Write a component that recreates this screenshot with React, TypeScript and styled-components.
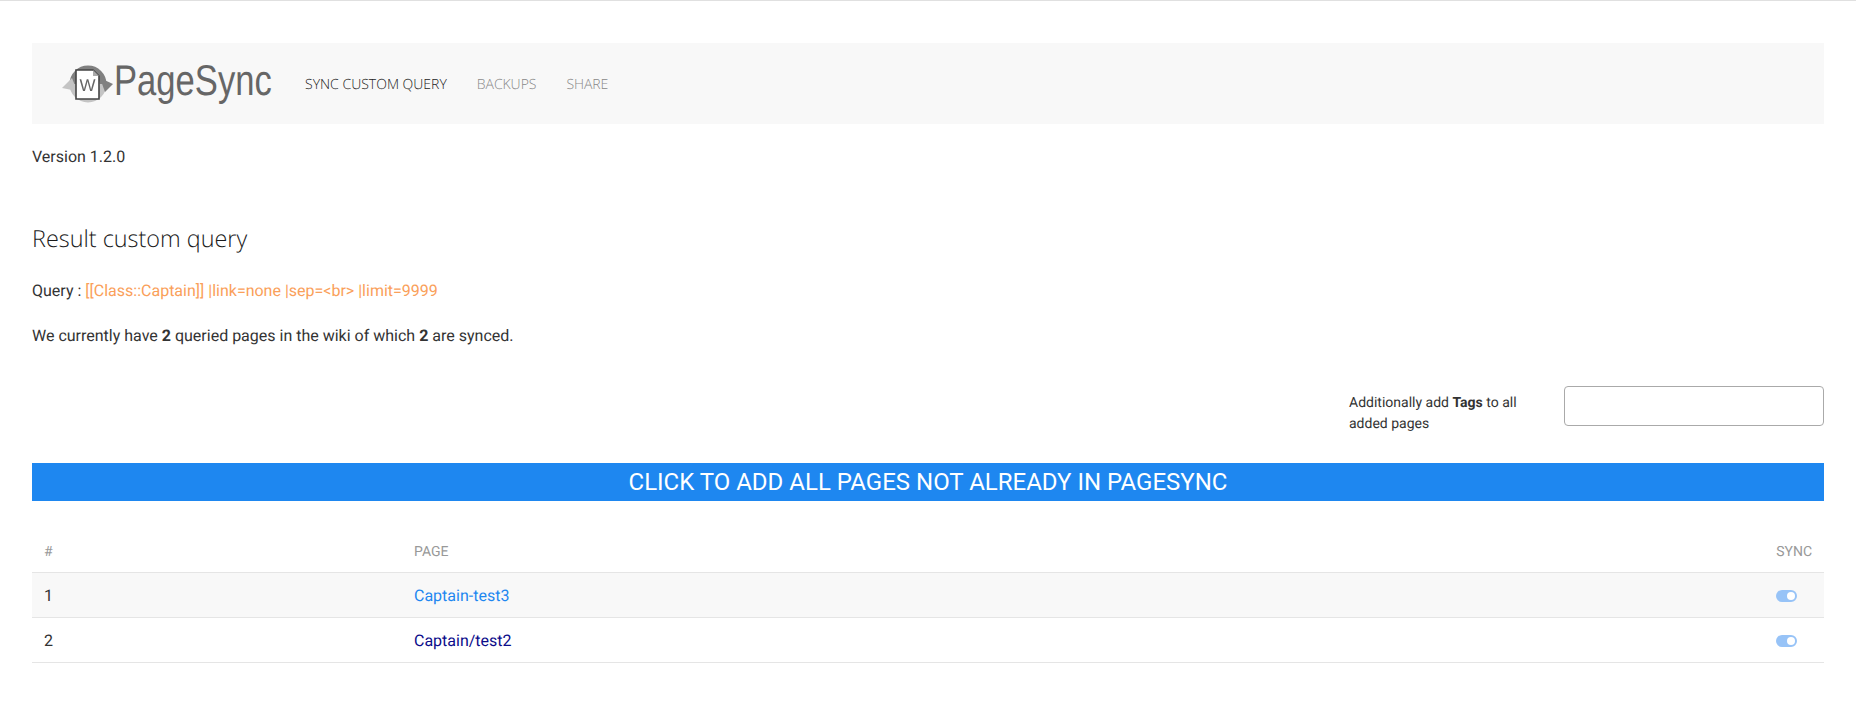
import React from "react";
import styled, { createGlobalStyle } from "styled-components";

const Global = createGlobalStyle`
  html, body { margin: 0; padding: 0; background: #fff; }
  body {
    font-family: Roboto, "Liberation Sans", sans-serif;
    font-size: 16px;
    line-height: 24px;
    color: #333;
    text-rendering: geometricPrecision;
  }
`;

const Page = styled.div`
  border-top: 1px solid #e0e0e0;
  padding: 42px 32px 0;
`;

const NavBar = styled.nav`
  display: flex;
  align-items: center;
  height: 81px;
  background: #f8f8f8;
  padding-left: 28px;
`;

const Logo = styled.div`
  display: flex;
  align-items: center;
  width: 245px;
  flex: none;
`;

const LogoMark = styled.svg`
  flex: none;
  filter: blur(0.4px);
`;

const LogoText = styled.span`
  display: inline-block;
  width: 160px;
  font-family: "Liberation Sans", Arial, sans-serif;
  font-size: 43px;
  line-height: 50px;
  color: #666;
  white-space: nowrap;
  transform: translate(-1px, -3px) scaleX(0.805);
  transform-origin: left center;
`;

const NavLinks = styled.div`
  display: flex;
  gap: 30px;
  padding-top: 2px;
`;

const NavLink = styled.a<{ $active?: boolean }>`
  font-family: "Open Sans", sans-serif;
  font-size: 14px;
  font-weight: 300;
  letter-spacing: ${(p) => (p.$active ? "0" : "-0.05px")};
  color: ${(p) => (p.$active ? "#222" : "#888")};
  text-transform: uppercase;
`;

const Version = styled.p`
  margin: 21px 0 0;
`;

const Heading = styled.h3`
  margin: 53px 0 25px;
  font-family: "Open Sans", sans-serif;
  font-size: 23.4px;
  font-weight: 300;
  line-height: 32px;
  color: #1a1a1a;
`;

const QueryLine = styled.p`
  margin: 0;
`;

const Summary = styled.p`
  margin: 21px 0 0;
`;

const QueryText = styled.span`
  color: #faa05a;
`;

const TagsRow = styled.div`
  display: flex;
  justify-content: flex-end;
  align-items: flex-start;
  margin-top: 38px;
`;

const TagsLabel = styled.label`
  width: 175px;
  margin: 7px 40px 0 0;
  font-size: 14px;
  line-height: 21px;
  color: #333;
`;

const TagsInput = styled.input`
  width: 260px;
  height: 40px;
  box-sizing: border-box;
  border: 1px solid #aaa;
  border-radius: 4px;
  background: #fff;
`;

const AddAll = styled.button`
  display: block;
  width: 100%;
  height: 38px;
  margin-top: 28px;
  padding: 0;
  border: 0;
  background: #1e87f0;
  color: #fff;
  font-family: Roboto, sans-serif;
  font-size: 24px;
  line-height: 38px;
  text-transform: uppercase;
`;

const Table = styled.table`
  width: 100%;
  margin-top: 18px;
  border-collapse: collapse;
`;

const Th = styled.th`
  padding: 23px 12px 9px;
  font-size: 14px;
  font-weight: 400;
  line-height: 21px;
  color: #999;
  text-align: left;
  text-transform: uppercase;
  vertical-align: bottom;
`;

const Row = styled.tr<{ $shaded?: boolean }>`
  height: 45px;
  background: ${(p) => (p.$shaded ? "#f8f8f8" : "#fff")};
  border-top: 1px solid #e5e5e5;
  border-bottom: 1px solid #e5e5e5;
`;

const Td = styled.td<{ $w?: string }>`
  padding: 2px 12px 0;
  width: ${(p) => p.$w ?? "auto"};
`;

const PageLink = styled.a<{ $visited?: boolean }>`
  color: ${(p) => (p.$visited ? "#0c0c8a" : "#1e87f0")};
`;

const Toggle = styled.span`
  display: block;
  position: relative;
  width: 21px;
  height: 12px;
  border-radius: 6px;
  background: #97c3f7;

  &::after {
    content: "";
    position: absolute;
    right: 2px;
    top: 2px;
    width: 8px;
    height: 8px;
    border-radius: 50%;
    background: #fff;
  }
`;

const LogoIcon = () => (
  <LogoMark width="55" height="46" viewBox="0 0 55 46" aria-hidden="true">
    <path d="M13 23 A15 15 0 0 1 43 23" fill="none" stroke="#808080" strokeWidth="7" />
    <path d="M43 23 A15 15 0 0 1 13 23" fill="none" stroke="#c4c4c4" strokeWidth="7" />
    <polygon points="53,23 40,17 45,31" fill="#808080" />
    <polygon points="2,27 12,17 17,30" fill="#c4c4c4" />
    <path d="M16 9 H33 L39 15 V38 H16 Z" fill="#fff" stroke="#444" strokeWidth="1.6" />
    <path d="M33 9 V15 H39 Z" fill="#aaa" />
    <text x="27.5" y="30" textAnchor="middle" fontFamily="Liberation Sans, sans-serif" fontSize="17" fill="#666">W</text>
  </LogoMark>
);

export default function App() {
  return (
    <>
      <Global />
      <Page>
        <NavBar>
          <Logo>
            <LogoIcon />
            <LogoText>PageSync</LogoText>
          </Logo>
          <NavLinks>
            <NavLink $active>Sync custom query</NavLink>
            <NavLink>Backups</NavLink>
            <NavLink>Share</NavLink>
          </NavLinks>
        </NavBar>
        <Version>Version 1.2.0</Version>
        <Heading>Result custom query</Heading>
        <QueryLine>
          Query : <QueryText>[[Class::Captain]] |link=none |sep=&lt;br&gt; |limit=9999</QueryText>
        </QueryLine>
        <Summary>
          We currently have <b>2</b> queried pages in the wiki of which <b>2</b> are synced.
        </Summary>
        <TagsRow>
          <TagsLabel>
            Additionally add <b>Tags</b> to all added pages
          </TagsLabel>
          <TagsInput />
        </TagsRow>
        <AddAll>Click to add all pages not already in PageSync</AddAll>
        <Table>
          <thead>
            <tr>
              <Th>#</Th>
              <Th>Page</Th>
              <Th>Sync</Th>
            </tr>
          </thead>
          <tbody>
            <Row $shaded>
              <Td $w="346px">1</Td>
              <Td>
                <PageLink>Captain-test3</PageLink>
              </Td>
              <Td $w="21px">
                <Toggle />
              </Td>
            </Row>
            <Row>
              <Td>2</Td>
              <Td>
                <PageLink $visited>Captain/test2</PageLink>
              </Td>
              <Td>
                <Toggle />
              </Td>
            </Row>
          </tbody>
        </Table>
      </Page>
    </>
  );
}
